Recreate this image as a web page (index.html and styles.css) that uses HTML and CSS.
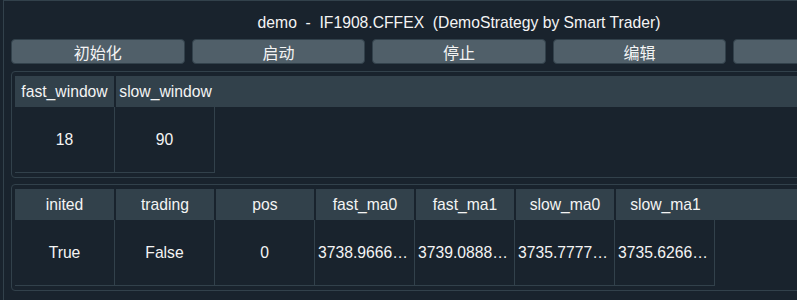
FILE: index.html
```html
<!DOCTYPE html>
<html>
<head>
	<meta charset="utf-8">
	<title>demo - IF1908.CFFEX</title>
	<link rel="stylesheet" href="styles.css">
</head>
<body>
	<div class="window">
		<div class="strategy">
			<div class="title">demo  -  IF1908.CFFEX  (DemoStrategy by Smart Trader)</div>
			<div class="buttons">
				<button class="btn">初始化</button>
				<button class="btn">启动</button>
				<button class="btn">停止</button>
				<button class="btn">编辑</button>
				<button class="btn">移除</button>
			</div>

			<!-- parameters -->
			<div class="monitor">
				<div class="head">
					<div class="th">fast_window</div>
					<div class="th">slow_window</div>
				</div>
				<div class="row">
					<div class="td">18</div>
					<div class="td">90</div>
				</div>
			</div>

			<!-- variables -->
			<div class="monitor">
				<div class="head">
					<div class="th">inited</div>
					<div class="th">trading</div>
					<div class="th">pos</div>
					<div class="th">fast_ma0</div>
					<div class="th">fast_ma1</div>
					<div class="th">slow_ma0</div>
					<div class="th">slow_ma1</div>
				</div>
				<div class="row">
					<div class="td">True</div>
					<div class="td">False</div>
					<div class="td">0</div>
					<div class="td">3738.9666666666667</div>
					<div class="td">3739.0888888888887</div>
					<div class="td">3735.7777777777776</div>
					<div class="td">3735.6266666666666</div>
				</div>
			</div>
		</div>
	</div>
</body>
</html>
```

FILE: styles.css
```css
html, body {
	margin: 0;
	background-color: #19232d;
	overflow: hidden;
}
body {
	font-family: "Liberation Sans", "Noto Sans CJK SC", sans-serif;
	font-size: 15.7px;
	color: #f4f4f4;
}
.window {
	margin-left: 3px;
	height: 299px;
	border-top: 1px solid #32414b;
	border-left: 1px solid #32414b;
}
.strategy {
	width: 896px;
	padding: 12px 11px 0 7px;
}
.title {
	height: 20px;
	line-height: 20px;
	text-align: center;
	white-space: pre;
}
.buttons {
	display: flex;
	gap: 7px;
	margin-top: 6px;
}
.btn {
	flex: 1;
	height: 25px;
	padding: 0;
	font-family: inherit;
	font-size: 16px;
	color: #f4f4f4;
	background-color: #505f69;
	border: 1px solid #32414b;
	border-radius: 4px;
}
.monitor {
	margin-top: 7px;
	padding: 4px 3px;
	border: 1px solid #32414b;
	border-radius: 4px;
}
.monitor + .monitor {
	margin-top: 6px;
}
.head {
	display: flex;
	height: 31px;
	background-color: #32414b;
}
.th {
	box-sizing: border-box;
	width: 100px;
	line-height: 31px;
	text-align: center;
	white-space: nowrap;
	border-left: 1px solid #19232d;
	border-right: 1px solid #19232d;
}
.th:first-child {
	border-left: none;
}
.th:last-child {
	border-right: none;
}
.row {
	display: flex;
	height: 66px;
}
.td {
	box-sizing: border-box;
	width: 100px;
	height: 66px;
	padding: 0 3px;
	line-height: 65px;
	text-align: center;
	white-space: nowrap;
	overflow: hidden;
	text-overflow: ellipsis;
	border-right: 1px solid #32414b;
	border-bottom: 1px solid #32414b;
}
```
